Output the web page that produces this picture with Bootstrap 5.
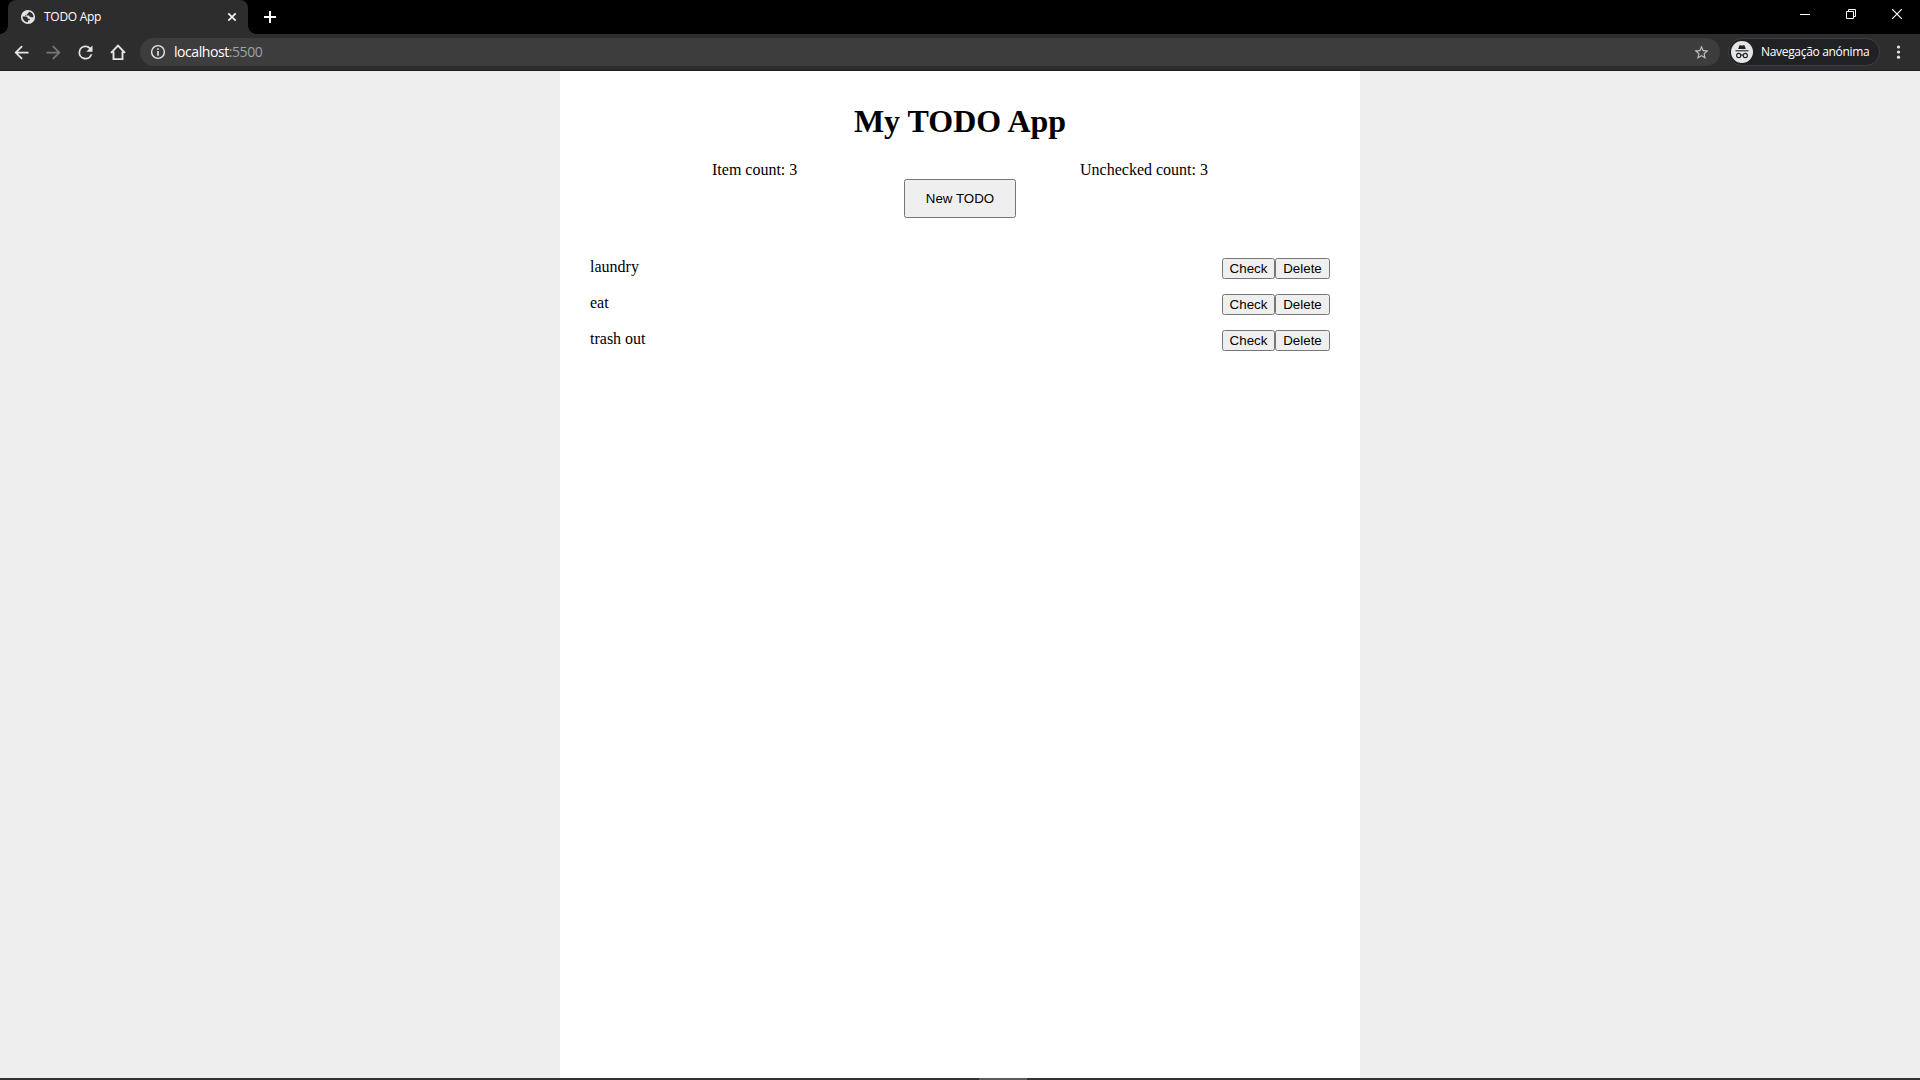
<!DOCTYPE html>
<html lang="pt">
<head>
<meta charset="utf-8">
<title>TODO App</title>
<link rel="stylesheet" href="https://cdn.jsdelivr.net/npm/bootstrap@5.3.0/dist/css/bootstrap.min.css">
<style>
body{font-family:"Liberation Serif",serif;font-size:16px;line-height:18px;color:#000;background:#eee}
svg{display:block;flex:none}
.chrome-ui{font-family:"Open Sans",sans-serif;color:#fff}
.tab-strip{height:34px;background:#000}
.tab-box{width:240px;margin-left:8px;padding:0 11px 0 12px;background:#2d2d2d;border-radius:8px 8px 0 0}
.tab-box::before,.tab-box::after{content:"";position:absolute;bottom:0;width:8px;height:8px}
.tab-box::before{left:-8px;background:radial-gradient(circle at 0 0,transparent 7.5px,#2d2d2d 8px)}
.tab-box::after{right:-8px;background:radial-gradient(circle at 100% 0,transparent 7.5px,#2d2d2d 8px)}
.tab-title{margin-left:8px;font-size:12px;letter-spacing:-.28px}
.win-btn{width:46px;height:28px}
.tool-bar{height:37px;background:#2d2d2d;border-bottom:1px solid #1e1e1e;padding:0 10px 0 6px}
.nav-ico{width:32px}
.nav-ico svg{margin-right:1px}
.address{height:28px;margin-left:6px;padding:0 10px;background:#3d3d3d;font-size:14px}
.address-text{margin-left:8px;letter-spacing:-.43px}
.port{color:#a0a0a0}
.incog{width:152px;height:28px;margin-left:8px;padding-left:2px;background:#202124;border:1px solid #3c4043;font-size:12px}
.incog-text{margin-left:8px;letter-spacing:-.32px}
.menu-dots{margin-left:7px}
.sheet{width:800px;background:#fff;padding:11px 30px 0}
.sheet h1{font-size:32px;line-height:37px;font-weight:700;margin:21px 0}
.counts{padding:0 122px}
.btn-native{--bs-btn-font-size:13.333px;--bs-btn-line-height:15px;--bs-btn-color:#000;--bs-btn-bg:#efefef;--bs-btn-border-color:#767676;--bs-btn-border-radius:2.5px;--bs-btn-padding-x:0;--bs-btn-padding-y:2px;font-family:"Liberation Sans",sans-serif;height:21px}
.btn-new{width:112px;height:39px}
.btn-check-item{width:53px}
.btn-delete{width:55px}
.todo-list{margin-top:40px;gap:15px}
.task-strip{height:2px;background:#343132}
.task-active{width:48px;height:2px;background:#5c5a5b;margin-left:979px}
</style>
<script src="https://cdn.jsdelivr.net/npm/bootstrap@5.3.0/dist/js/bootstrap.bundle.min.js"></script>
</head>
<body class="vh-100 d-flex flex-column overflow-hidden">
<header class="chrome-ui">
  <div class="tab-strip d-flex">
    <div class="tab-box position-relative d-flex align-items-center">
      <svg width="16" height="16" viewBox="0 0 16 16"><circle cx="8" cy="8" r="7.100" fill="#e4e5e6"/><path d="M2.500 7.600H5.600Q7.800 7.700 7.900 9.700H9.700V11.300H8V13.300C5 13.400 2.600 11 2.500 7.600ZM9.200 2.700Q9.200 4.300 7.900 4.400H6.700V6H5.300V7.600M9.200 2.700C12 3.200 13.700 5.600 13.500 8.300H11.300Q9.300 8.300 9.200 6.500H6.700V4.600H8Q9.200 4.300 9.200 2.700Z" fill="#2d2d2d"/></svg>
      <span class="tab-title me-auto">TODO App</span>
      <svg width="10" height="10" viewBox="0 0 10 10"><path d="m1.300 1.300 7.400 7.400m0-7.400-7.400 7.400" stroke="#f1f1f1" stroke-width="1.700"/></svg>
    </div>
    <svg class="ms-3 mt-2" width="12" height="18" viewBox="0 0 12 18"><path d="M6 3v12M0 9h12" stroke="#fff" stroke-width="2"/></svg>
    <div class="d-flex ms-auto">
      <div class="win-btn d-flex align-items-center justify-content-center"><svg width="10" height="10" viewBox="0 0 10 10"><path d="M0 5.500h10" stroke="#fff"/></svg></div>
      <div class="win-btn d-flex align-items-center justify-content-center"><svg width="10" height="10" viewBox="0 0 10 10"><path d="M.5 2.500h7v7h-7zM2.500 2.500v-2h7v7h-2" fill="none" stroke="#fff"/></svg></div>
      <div class="win-btn d-flex align-items-center justify-content-center"><svg width="10" height="10" viewBox="0 0 10 10"><path d="m0 0 10 10M10 0 0 10" stroke="#fff" stroke-width="1.200"/></svg></div>
    </div>
  </div>
  <div class="tool-bar d-flex align-items-center">
    <div class="nav-ico d-flex justify-content-center"><svg width="21" height="21" viewBox="0 0 24 24"><path d="M20 11H7.830l5.590-5.590L12 4l-8 8 8 8 1.410-1.410L7.830 13H20z" fill="#e6e6e6"/></svg></div>
    <div class="nav-ico d-flex justify-content-center"><svg width="21" height="21" viewBox="0 0 24 24"><path d="m12 4-1.410 1.410L16.170 11H4v2h12.170l-5.580 5.590L12 20l8-8z" fill="#777"/></svg></div>
    <div class="nav-ico d-flex justify-content-center"><svg width="21" height="21" viewBox="0 0 24 24"><path d="M17.650 6.350A7.960 7.960 0 0 0 12 4a8 8 0 1 0 7.730 10h-2.080A6 6 0 1 1 12 6c1.660 0 3.140.69 4.220 1.780L13 11h7V4z" fill="#e6e6e6"/></svg></div>
    <div class="nav-ico d-flex justify-content-center"><svg class="me-0" width="16" height="16" viewBox="0 0 16 16"><path d="M1 8.900 8 1.600l7 7.300M3.500 7.500v7.600h9V7.500" fill="none" stroke="#e6e6e6" stroke-width="1.900"/></svg></div>
    <div class="address rounded-pill d-flex align-items-center flex-grow-1">
      <svg width="16" height="16" viewBox="0 0 16 16"><circle cx="8" cy="8" r="6.400" fill="none" stroke="#e8e8e8" stroke-width="1.400"/><path d="M8 4.200v1.600M8 7v4.800" stroke="#e8e8e8" stroke-width="1.600"/></svg>
      <span class="address-text me-auto">localhost<span class="port">:5500</span></span>
      <svg width="17" height="17" viewBox="0 0 24 24"><path d="m22 9.240-7.190-.62L12 2 9.190 8.630 2 9.240l5.460 4.730L5.820 21 12 17.270 18.180 21l-1.630-7.030zM12 15.400l-3.760 2.270 1-4.280-3.320-2.880 4.380-.38L12 6.100l1.710 4.040 4.380.38-3.320 2.880 1 4.280z" fill="#c0c0c0"/></svg>
    </div>
    <div class="incog rounded-pill d-flex align-items-center">
      <svg width="22" height="22" viewBox="0 0 22 22"><circle cx="11" cy="11" r="11" fill="#e4e5e6"/><path d="M7.200 8 8.500 4.200h1.300L11 4.700l1.200-.5h1.300L14.800 8z" fill="#202124"/><path d="M4.500 9.800h13" stroke="#202124" stroke-width="1.100"/><g fill="none" stroke="#202124" stroke-width="1.100"><circle cx="7.700" cy="14.500" r="2.100"/><circle cx="14.300" cy="14.500" r="2.100"/><path d="M9.900 14.200q1.100-.6 2.200 0"/></g></svg>
      <span class="incog-text text-nowrap">Navegação anónima</span>
    </div>
    <svg class="menu-dots" width="23" height="16" viewBox="0 0 23 16"><g fill="#e6e6e6"><circle cx="11.500" cy="3" r="1.600"/><circle cx="11.500" cy="8" r="1.600"/><circle cx="11.500" cy="13.200" r="1.600"/></g></svg>
  </div>
</header>
<main class="sheet mx-auto flex-grow-1">
  <h1 class="text-center">My TODO App</h1>
  <div class="counts d-flex justify-content-between"><span>Item count: 3</span><span>Unchecked count: 3</span></div>
  <button class="btn btn-native btn-new d-block mx-auto">New TODO</button>
  <ul class="todo-list list-unstyled d-flex flex-column">
    <li class="d-flex"><span class="me-auto">laundry</span><button class="btn btn-native btn-check-item">Check</button><button class="btn btn-native btn-delete">Delete</button></li>
    <li class="d-flex"><span class="me-auto">eat</span><button class="btn btn-native btn-check-item">Check</button><button class="btn btn-native btn-delete">Delete</button></li>
    <li class="d-flex"><span class="me-auto">trash out</span><button class="btn btn-native btn-check-item">Check</button><button class="btn btn-native btn-delete">Delete</button></li>
  </ul>
</main>
<footer class="task-strip"><div class="task-active"></div></footer>
</body>
</html>
